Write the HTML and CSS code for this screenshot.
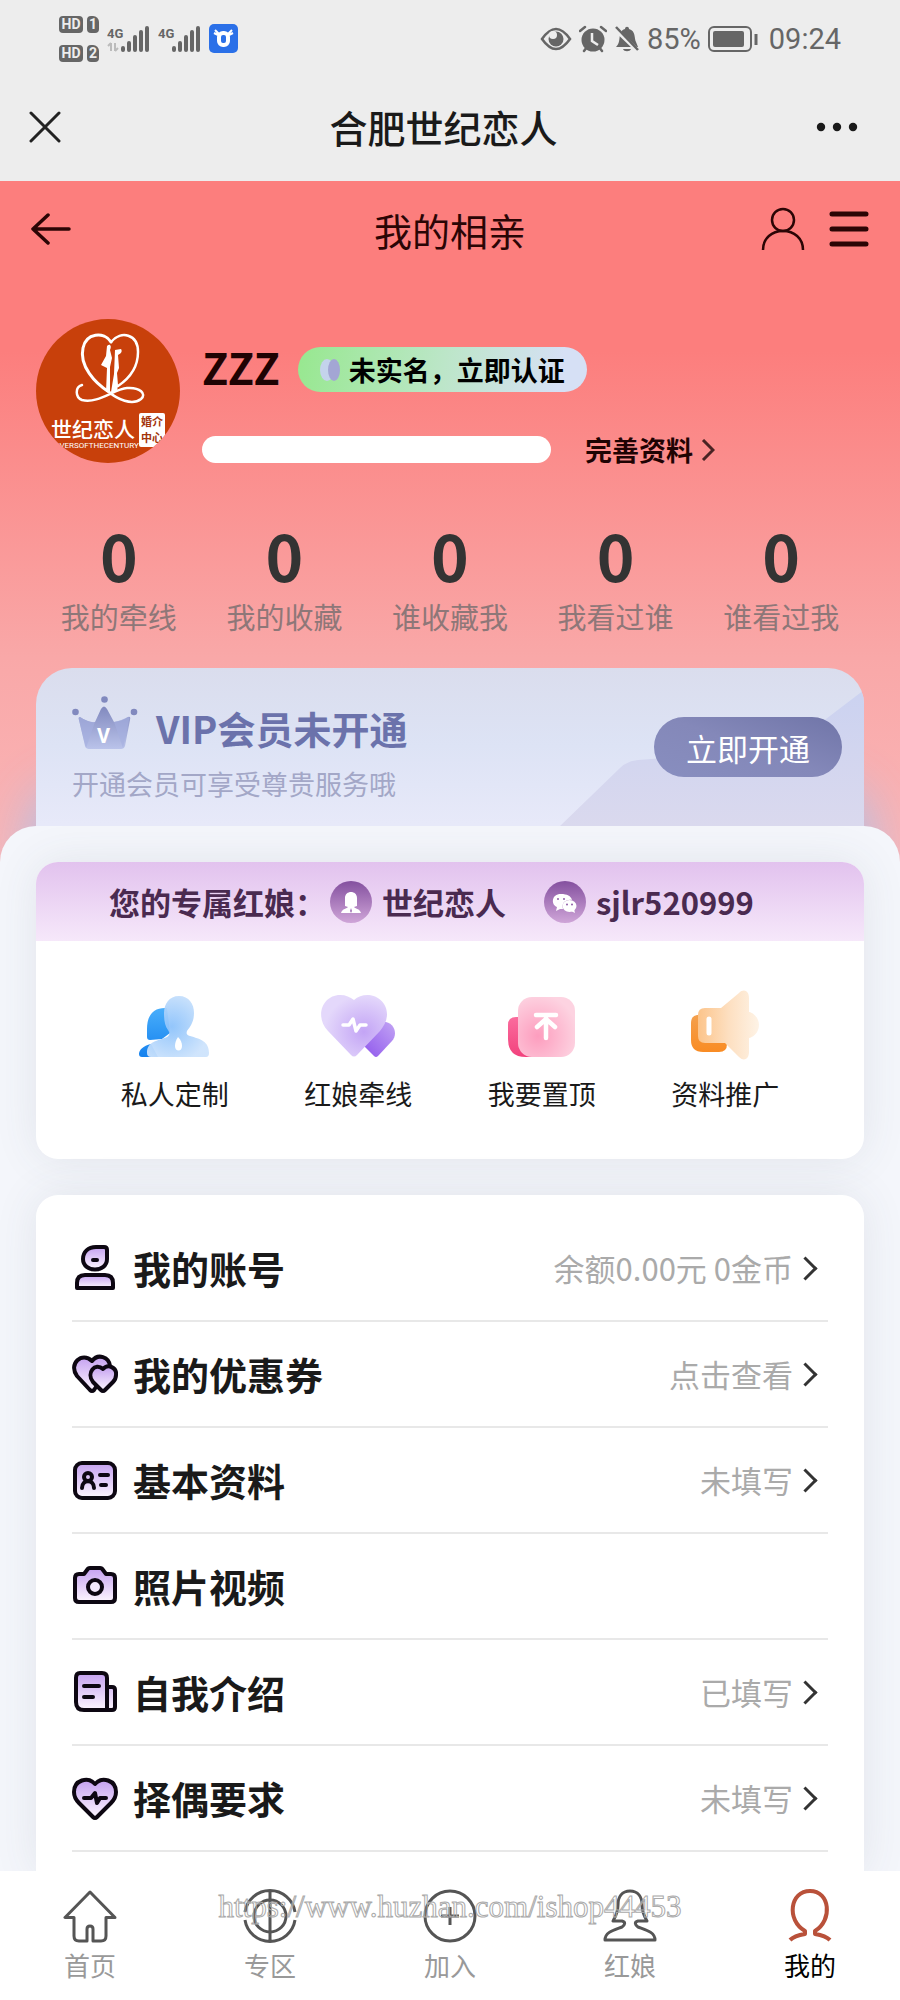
FILE: index.html
```html
<!DOCTYPE html>
<html lang="zh-CN">
<head>
  <meta charset="UTF-8">
  <meta name="viewport" content="width=device-width, initial-scale=1.0">
  <title>我的相亲</title>
  <link rel="stylesheet" href="styles.css">
</head>
<body>
<svg class="defs" width="0" height="0" aria-hidden="true">
  <defs>
    <linearGradient id="lilac" x1="0" y1="0" x2="0" y2="1">
      <stop offset="0" stop-color="#c4a0f0"/><stop offset="1" stop-color="#fdf6ff"/>
    </linearGradient>
    <linearGradient id="plum" x1="0" y1="0" x2="0" y2="1">
      <stop offset="0" stop-color="#84509f"/><stop offset="1" stop-color="#cfa5d8"/>
    </linearGradient>
  </defs>
</svg>

<!-- Статус-бар -->
<div class="status-bar">
  <div class="status-left">
    <div class="hd-group">
      <div class="hd-row"><span class="hd">HD</span><span class="sim">1</span></div>
      <div class="hd-row"><span class="hd">HD</span><span class="sim">2</span></div>
    </div>
    <svg class="signal" width="43" height="28" viewBox="0 0 43 28">
      <text x="0" y="13" class="net">4G</text>
      <path d="M4 26v-8M4 18l-3 3M8 18v8M8 26l3-3" stroke="#bbb" stroke-width="2" fill="none"/>
      <path d="M16 23v2M22 18v7M28 12v13M34 7v18M40 3v22" stroke="#666" stroke-width="4" stroke-linecap="round"/>
    </svg>
    <svg class="signal" width="43" height="28" viewBox="0 0 43 28">
      <text x="0" y="13" class="net">4G</text>
      <path d="M16 23v2M22 18v7M28 12v13M34 7v18M40 3v22" stroke="#666" stroke-width="4" stroke-linecap="round"/>
    </svg>
    <svg width="29" height="29" viewBox="0 0 29 29">
      <rect width="29" height="29" rx="5" fill="#2b70e8"/>
      <path d="M6 6l4 4M23 6l-4 4M5 9l4 2M24 9l-4 2" stroke="#fff" stroke-width="2"/>
      <rect x="10" y="9" width="9" height="12" rx="4" fill="none" stroke="#fff" stroke-width="4"/>
    </svg>
  </div>
  <div class="status-right">
    <svg width="32" height="28" viewBox="0 0 32 28">
      <path d="M2 14Q16-6 30 14Q16 34 2 14z" fill="none" stroke="#666" stroke-width="2.5"/>
      <circle cx="16" cy="14" r="7.5" fill="#666"/>
      <circle cx="13" cy="10" r="4" fill="#ededed"/>
    </svg>
    <svg width="28" height="28" viewBox="0 0 28 28">
      <circle cx="14" cy="15" r="11.5" fill="#666"/>
      <path d="M1 6l5-4M27 6l-5-4M5 26l3-4M23 26l-3-4" stroke="#666" stroke-width="2.5" stroke-linecap="round"/>
      <path d="M13 8v8l6 4" fill="none" stroke="#ededed" stroke-width="2.5"/>
    </svg>
    <svg width="26" height="28" viewBox="0 0 26 28">
      <path d="M2 22c4-4 3-8 4-12 1-4 3-6 5-6 0-3 4-3 4 0 7 2 5 9 7 13l2 5zM9 24h8c-1 3-7 3-8 0z" fill="#666"/>
      <path d="M0 3l24 23" stroke="#ededed" stroke-width="4"/>
      <path d="M2 2l22 23" stroke="#666" stroke-width="2.5"/>
    </svg>
    <span>85%</span>
    <svg width="50" height="28" viewBox="0 0 50 28">
      <rect x="1" y="2" width="42" height="24" rx="5" fill="none" stroke="#666" stroke-width="2"/>
      <rect x="5" y="6" width="31" height="16" rx="2" fill="#666"/>
      <path d="M48 9v11" stroke="#666" stroke-width="3"/>
    </svg>
    <span class="clock">09:24</span>
  </div>
</div>

<div class="title-bar">
  <button class="icon-btn" aria-label="关闭">
    <svg width="32" height="32" viewBox="0 0 32 32"><path d="M2 2l28 28M30 2L2 30" stroke="#222" stroke-width="3" stroke-linecap="round"/></svg>
  </button>
  <div class="page-title">合肥世纪恋人</div>
  <button class="icon-btn" aria-label="更多">
    <svg width="42" height="10" viewBox="0 0 42 10" fill="#1a1a1a"><circle cx="5" cy="5" r="4.200"/><circle cx="21" cy="5" r="4.200"/><circle cx="37" cy="5" r="4.200"/></svg>
  </button>
</div>

<!-- Шапка профиля -->
<header class="hero">
  <div class="nav-bar">
    <button class="icon-btn" aria-label="返回">
      <svg width="40" height="34" viewBox="0 0 40 34" fill="none" stroke="#2a0505" stroke-width="3.500" stroke-linecap="round" stroke-linejoin="round"><path d="M17 3L2 17l15 14M2 17h36"/></svg>
    </button>
    <h1>我的相亲</h1>
    <div class="nav-actions">
      <button class="icon-btn" aria-label="个人">
        <svg width="44" height="44" viewBox="0 0 44 44" fill="none" stroke="#2a0505" stroke-width="2.500"><circle cx="22" cy="13" r="11"/><path d="M2 43c0-12 9-19 20-19s20 7 20 19"/></svg>
      </button>
      <button class="icon-btn" aria-label="菜单">
        <svg width="40" height="36" viewBox="0 0 40 36" stroke="#2a0505" stroke-width="5" stroke-linecap="round"><path d="M3 3h34M3 18h34M3 33h34"/></svg>
      </button>
    </div>
  </div>

  <div class="profile">
    <svg class="avatar" width="144" height="144" viewBox="0 0 144 144">
      <clipPath id="round"><circle cx="72" cy="72" r="72"/></clipPath>
      <g clip-path="url(#round)">
        <rect width="144" height="144" fill="#c8400b"/>
        <g fill="none" stroke="#fff" stroke-linecap="round">
          <path d="M75 23C68 12 50 14 47 29c-4 18 12 35 26 44" stroke-width="3"/>
          <path d="M75 23c10-12 27-8 27 10 0 14-8 26-20 34" stroke-width="2.500"/>
          <path d="M46 66c-7 2-7 12 0 15 16 4 32-11 45-12 13-1 20 6 14 11-9 7-24 0-32-7" stroke-width="2.500"/>
        </g>
        <path d="M71 27c3-3 5 0 3 4l2 8-2 9v25h-4l1-24-6-3 5-9zM79 31l6-1c2 3-1 5-3 6l1 13-2 5 1 12-1 7h-6l3-18z" fill="#fff"/>
        <text x="15" y="118" class="logo-name">世纪恋人</text>
        <text x="14" y="129" class="logo-sub">LOVERSOFTHECENTURY</text>
        <rect x="103" y="94" width="26" height="34" rx="2" fill="#fff"/>
        <text x="105" y="107" class="logo-tag">婚介</text>
        <text x="105" y="123" class="logo-tag">中心</text>
      </g>
    </svg>
    <div class="profile-info">
      <div class="profile-row">
        <span class="nickname">ZZZ</span>
        <a class="verify" href="#">
          <svg width="20" height="24" viewBox="0 0 20 24"><ellipse cx="7" cy="12" rx="7" ry="11" fill="#c4d3ec"/><ellipse cx="14" cy="12" rx="6" ry="11" fill="#a3a6d4"/></svg>
          未实名，立即认证
        </a>
      </div>
      <div class="profile-row">
        <div class="progress"></div>
        <a class="complete" href="#">完善资料
          <svg width="14" height="22" viewBox="0 0 14 22"><path d="M2 1l10 10L2 21" fill="none" stroke="#4a2323" stroke-width="3"/></svg>
        </a>
      </div>
    </div>
  </div>

  <div class="stats">
    <a href="#"><b>0</b><span>我的牵线</span></a>
    <a href="#"><b>0</b><span>我的收藏</span></a>
    <a href="#"><b>0</b><span>谁收藏我</span></a>
    <a href="#"><b>0</b><span>我看过谁</span></a>
    <a href="#"><b>0</b><span>谁看过我</span></a>
  </div>

  <div class="vip">
    <svg class="vip-bg" width="304" height="136" viewBox="0 0 304 136">
      <defs><linearGradient id="facet" x1="0" y1="0" x2="0" y2="1"><stop offset="0" stop-color="#cbd2f0"/><stop offset="1" stop-color="#dad9ee"/></linearGradient></defs>
      <path d="M0 136L60 78q7-7 18-8l132-10q20-3 31-12L304 0v136z" fill="url(#facet)"/>
    </svg>
    <div class="vip-text">
      <div class="vip-title">
        <svg width="66" height="54" viewBox="0 0 66 54">
          <defs><linearGradient id="crown" x1="0" y1="0" x2="0" y2="1"><stop offset="0" stop-color="#8189be"/><stop offset="1" stop-color="#bac3ea"/></linearGradient></defs>
          <circle cx="3.500" cy="16" r="3.300" fill="#8189be"/><circle cx="32.500" cy="3.500" r="3.300" fill="#8189be"/><circle cx="62" cy="16" r="3.300" fill="#8189be"/>
          <path d="M8 21q9 6 15 5l6-13q3-5 6 0l7 13q8-1 14-5 3-1 2 3l-5 26q-1 3-4 3H17q-3 0-4-3L7 24q-1-3 1-3z" fill="url(#crown)"/>
          <path d="M8 21q9 6 15 5l-9 26L7 24q-1-3 1-3zM56 21q-8 4-14 5l9 26 6-28q1-3-1-3z" fill="#a5afdf" opacity=".6"/>
          <text x="25" y="47" class="crown-v">V</text>
        </svg>
        <h2>VIP会员未开通</h2>
      </div>
      <p>开通会员可享受尊贵服务哦</p>
    </div>
    <button class="vip-btn">立即开通</button>
  </div>
</header>

<main class="sheet">
  <section class="card matchmaker">
    <div class="matchmaker-head">
      <span>您的专属红娘：</span>
      <span class="contact">
        <svg width="42" height="42" viewBox="0 0 42 42"><circle cx="21" cy="21" r="21" fill="url(#plum)"/><path d="M15 25V17c0-8 12-8 12 0v8l-3 1c2 2 6 2 7 6H11c1-4 5-4 7-6z" fill="#fff"/><path d="M21 27l1 3-1 2-1-2z" fill="#a273b8"/></svg>
        世纪恋人
      </span>
      <span class="contact">
        <svg width="42" height="42" viewBox="0 0 42 42"><circle cx="21" cy="21" r="21" fill="url(#plum)"/><path d="M17 13c-10 0-10 11-4 13l-1 4 4-2h3c-2-6 3-10 9-9-1-4-5-6-11-6z" fill="#fff"/><ellipse cx="25.500" cy="25" rx="7" ry="6" fill="#fff"/><path d="M27 30l4 2-1-4z" fill="#fff"/><g fill="#8f5da8"><circle cx="14" cy="18" r="1"/><circle cx="20" cy="18" r="1"/><circle cx="23" cy="23.500" r="1"/><circle cx="28" cy="23.500" r="1"/></g></svg>
        sjlr520999
      </span>
    </div>
    <nav class="shortcuts">
      <a href="#">
        <svg width="74" height="74" viewBox="0 0 74 74">
          <defs>
            <linearGradient id="blueBack" x1="0" y1="0" x2="0" y2="1"><stop offset="0" stop-color="#49aefb"/><stop offset="1" stop-color="#1481ee"/></linearGradient>
            <radialGradient id="blueFront" cx=".4" cy=".5" r=".6"><stop offset="0" stop-color="#8cc2fb"/><stop offset="1" stop-color="#cde3fc"/></radialGradient>
          </defs>
          <path d="M29 18C14 17 9 27 9 39v8q0 3 3 3l12-1 8-6zM13 54C5 56 1 60 1 64q0 3 3 3h16z" fill="url(#blueBack)"/>
          <path d="M41 6c10 0 15 8 15 17 0 8-3 13-7 18-1 3 0 4 3 5 10 3 19 5 19 17q0 4-3 4H13q-4 0-4-4c0-12 11-12 20-16 3-2 3-4 1-7-3-4-4-9-4-17 0-9 5-17 15-17z" fill="url(#blueFront)" opacity=".94"/>
          <path d="M40 47c-2 3-3 6-3 9 0 6 7 6 7 0 0-3-1-6-4-9z" fill="#fff"/>
        </svg>
        <span>私人定制</span>
      </a>
      <a href="#">
        <svg width="74" height="74" viewBox="0 0 74 74">
          <defs>
            <linearGradient id="violetBack" x1="1" y1="0" x2="0" y2="1"><stop offset="0" stop-color="#c2a4f4"/><stop offset="1" stop-color="#8e55ec"/></linearGradient>
            <radialGradient id="violetFront" cx=".65" cy=".6" r=".6"><stop offset="0" stop-color="#c3a4f5"/><stop offset="1" stop-color="#e4d8fb"/></radialGradient>
          </defs>
          <path d="M60 32c12-2 18 11 11 19L57 66q-2 2-4 0L41 54z" fill="url(#violetBack)"/>
          <path d="M33 10C45-1 66 7 66 24c0 7-3 12-7 17L36 65q-3 3-6 0L7 41C-7 26 2 5 19 5c6 0 10 2 14 5z" fill="url(#violetFront)"/>
          <path d="M22 35h6l4-6 3 12 4-6h6" fill="none" stroke="#fff" stroke-width="3.500" stroke-linecap="round" stroke-linejoin="round"/>
        </svg>
        <span>红娘牵线</span>
      </a>
      <a href="#">
        <svg width="74" height="74" viewBox="0 0 74 74">
          <defs>
            <linearGradient id="pinkBack" x1="0" y1="0" x2="0" y2="1"><stop offset="0" stop-color="#fa6c9d"/><stop offset="1" stop-color="#f2427d"/></linearGradient>
            <radialGradient id="pinkFront" cx=".35" cy=".65" r=".7"><stop offset="0" stop-color="#fd9dbe"/><stop offset="1" stop-color="#fdd3e1"/></radialGradient>
          </defs>
          <path d="M14 27h-3q-8 0-8 8v14q0 18 18 18h20V45z" fill="url(#pinkBack)"/>
          <rect x="13" y="7" width="57" height="60" rx="14" fill="url(#pinkFront)"/>
          <path d="M31 25h20M41 28v20M32 37l9-8 9 8" fill="none" stroke="#fff" stroke-width="4.500" stroke-linecap="round" stroke-linejoin="round"/>
        </svg>
        <span>我要置顶</span>
      </a>
      <a href="#">
        <svg width="74" height="74" viewBox="0 0 74 74">
          <defs>
            <linearGradient id="orangeBack" x1="0" y1="0" x2="0" y2="1"><stop offset="0" stop-color="#f4a04d"/><stop offset="1" stop-color="#f98c24"/></linearGradient>
            <linearGradient id="orangeFront" x1="0" y1="0" x2="1" y2="0"><stop offset="0" stop-color="#fcc48a"/><stop offset=".5" stop-color="#fddfc0"/><stop offset="1" stop-color="#fef3e6"/></linearGradient>
          </defs>
          <path d="M12 25H9q-6 1-6 8v17q0 12 12 12h16q8 0 8-8l-9-12z" fill="url(#orangeBack)"/>
          <path d="M17 18h16L51 3c5-5 10-2 10 5v14c3 0 10 5 10 13s-7 13-10 13v14c0 7-5 10-10 5L37 53H17q-7 0-7-7V25q0-7 7-7z" fill="url(#orangeFront)"/>
          <path d="M21 29v14" stroke="#fff" stroke-width="5" stroke-linecap="round"/>
        </svg>
        <span>资料推广</span>
      </a>
    </nav>
  </section>

  <section class="card menu">
    <a class="menu-item" href="#">
      <svg class="menu-icon" width="46" height="46" viewBox="0 0 46 46"><path d="M24 2h8q3 0 3 3v9c0 14-24 14-24 0C11 7 16 2 24 2z"/><path d="M5 43v-5q0-8 8-8h20q8 0 8 8v5z"/><path d="M21 15h4"/></svg>
      <span class="menu-name">我的账号</span><span class="menu-value">余额0.00元 0金币</span><i class="arrow"></i>
    </a>
    <a class="menu-item" href="#">
      <svg class="menu-icon" width="46" height="46" viewBox="0 0 46 46"><path d="M20 10C26 2 37 6 38 15L22 39q-2 2-4 0L5 25C-4 13 10 0 20 10z"/><path d="M31 18c5-6 14-1 13 6 0 3-1 5-3 7l-8 8q-2 2-4 0l-8-8c-7-9 2-20 10-13z"/></svg>
      <span class="menu-name">我的优惠券</span><span class="menu-value">点击查看</span><i class="arrow"></i>
    </a>
    <a class="menu-item" href="#">
      <svg class="menu-icon" width="46" height="46" viewBox="0 0 46 46"><rect x="3" y="6" width="40" height="35" rx="7"/><circle cx="16" cy="20" r="4" fill="none"/><path d="M10 31c0-9 12-9 12 0M28 18h8M29 28h5" fill="none"/></svg>
      <span class="menu-name">基本资料</span><span class="menu-value">未填写</span><i class="arrow"></i>
    </a>
    <a class="menu-item" href="#">
      <svg class="menu-icon" width="46" height="46" viewBox="0 0 46 46"><path d="M7 11h5l3-4q1-2 3-2h10q2 0 3 2l3 4h5q4 0 4 4v20q0 4-4 4H7q-4 0-4-4V15q0-4 4-4z"/><circle cx="23" cy="24" r="7" fill="#f3e9fd"/></svg>
      <span class="menu-name">照片视频</span>
    </a>
    <a class="menu-item" href="#">
      <svg class="menu-icon" width="46" height="46" viewBox="0 0 46 46"><path d="M35 18h5q3 0 3 3v17q0 3-3 3h-5zM8 4h22q5 0 5 5v32H12q-8 0-8-8V9q0-5 4-5z"/><path d="M12 17h15M12 28h9"/></svg>
      <span class="menu-name">自我介绍</span><span class="menu-value">已填写</span><i class="arrow"></i>
    </a>
    <a class="menu-item" href="#">
      <svg class="menu-icon" width="46" height="46" viewBox="0 0 46 46"><path d="M23 9c7-8 21-4 21 8 0 5-2 8-5 11L25 42q-2 2-4 0L7 28c-3-3-5-6-5-11C2 5 16 1 23 9z"/><path d="M12 23h7l4-5 2 10 3-5h6" fill="none"/></svg>
      <span class="menu-name">择偶要求</span><span class="menu-value">未填写</span><i class="arrow"></i>
    </a>
  </section>
</main>

<!-- Нижнее меню -->
<nav class="tab-bar">
  <a href="#">
    <svg width="54" height="54" viewBox="0 0 54 54"><path d="M27 3L2 28.500h9V47q0 5 5 5h8V40q0-3 3-3t3 3v12h8q5 0 5-5V28.500h9z"/></svg>
    首页
  </a>
  <a href="#">
    <svg width="54" height="54" viewBox="0 0 54 54"><path d="M2 23a25.300 25.300 0 0 1 50 0M2 31a25.300 25.300 0 0 0 50 0M27 2v50"/><circle cx="27" cy="27" r="16"/></svg>
    专区
  </a>
  <a href="#">
    <svg width="54" height="54" viewBox="0 0 54 54"><circle cx="27" cy="27" r="25"/><path d="M27 18v18M18 27h18"/></svg>
    加入
  </a>
  <a href="#">
    <svg width="54" height="54" viewBox="0 0 54 54"><path d="M27 2c-8 0-12 6-12 14 0 6-2 11-5 16h9c4 1 3 4 0 6-8 3-17 5-17 13h50c0-8-9-10-17-13-3-2-4-5 0-6h9c-3-5-5-10-5-16 0-8-4-14-12-14z"/></svg>
    红娘
  </a>
  <a href="#" class="active">
    <svg width="54" height="54" viewBox="0 0 54 54"><path d="M7 51c4-4 9-5 15-6v-3C3 31 7 2 27 2s23 29 5 40v3c6 1 11 2 15 6"/></svg>
    我的
  </a>
  <div class="watermark">https://www.huzhan.com/ishop44453</div>
</nav>
</body>
</html>
```

FILE: styles.css
```css
* {
  box-sizing: border-box;
}
body {
  margin: 0;
  padding-bottom: 129px;
  background-color: #f4f6fb;
  font-family: "Noto Sans CJK SC", sans-serif;
  color: #1a1a1a;
}
a {
  color: inherit;
  text-decoration: none;
}
svg {
  flex: none;
  display: block;
}
.defs {
  position: absolute;
}
h1, h2, p {
  margin: 0;
}
.icon-btn {
  padding: 0;
  border: 0;
  background: none;
}

/* status bar */
.status-bar {
  display: flex;
  justify-content: space-between;
  align-items: center;
  height: 77px;
  padding: 0 59px;
  background-color: #ededed;
  color: #666;
}
.status-left, .status-right {
  display: flex;
  align-items: center;
  gap: 8px;
}
.status-right {
  gap: 7px;
  font: 29px/32px Roboto, sans-serif;
}
.clock {
  margin-left: 4px;
}
.hd-group {
  display: grid;
  gap: 12px;
}
.hd-row {
  display: flex;
  gap: 4px;
}
.hd, .sim {
  width: 24px;
  height: 17px;
  border-radius: 4px;
  background-color: #666;
  color: #ededed;
  font: bold 14px/17px Roboto, sans-serif;
  text-align: center;
}
.sim {
  width: 12px;
  border-top-right-radius: 6px;
}
.net {
  font: bold 13px Roboto, sans-serif;
  fill: #666;
}

/* title */
.title-bar {
  display: grid;
  grid-template-columns: 1fr auto 1fr;
  align-items: center;
  height: 104px;
  padding: 0 42px 4px 29px;
  background-color: #ededed;
}
.title-bar .icon-btn {
  justify-self: start;
}
.title-bar .icon-btn:last-child {
  justify-self: end;
}
.page-title {
  font-size: 38px;
  line-height: 52px;
  font-weight: 500;
}

/* hero */
.hero {
  overflow: hidden;
  background: linear-gradient(#fc7e7d 25%, #f9a8a8 70%, #fab6b8);
}
.nav-bar {
  display: flex;
  justify-content: space-between;
  align-items: center;
  height: 96px;
  padding: 0 31px;
}
.nav-bar > .icon-btn, .nav-actions {
  flex: 1;
}
h1 {
  font-size: 38px;
  font-weight: 400;
  color: #2a0505;
}
.nav-actions {
  display: flex;
  justify-content: flex-end;
  align-items: center;
  gap: 24px;
}
.profile {
  display: flex;
  align-items: flex-end;
  gap: 22px;
  padding: 42px 36px 0;
}
.logo-name {
  font-size: 21px;
  font-weight: 500;
  fill: #fff;
}
.logo-sub {
  font: 8px Roboto, sans-serif;
  fill: #fff;
}
.logo-tag {
  font-size: 11px;
  font-weight: bold;
  fill: #a3340a;
}
.profile-info {
  flex: 1;
  display: grid;
  gap: 44px;
}
.profile-row {
  display: flex;
  align-items: center;
}
.nickname {
  margin-right: 18px;
  padding-bottom: 6px;
  font-size: 43px;
  line-height: 39px;
  font-weight: bold;
  color: #1f0303;
}
.verify {
  display: flex;
  align-items: center;
  gap: 9px;
  height: 45px;
  padding: 0 22px;
  border-radius: 23px;
  background: linear-gradient(100deg, #97e88f, #bce6c8 50%, #d6e0f5 90%);
  color: #000;
  font-size: 27px;
  font-weight: bold;
}
.progress {
  flex: 0 1 349px;
  height: 27px;
  border-radius: 14px;
  background-color: #fff;
}
.complete {
  display: flex;
  align-items: center;
  gap: 8px;
  margin-left: 34px;
  color: #1f0303;
  font-size: 27px;
  line-height: 27px;
  font-weight: bold;
}
.stats {
  display: grid;
  grid-template-columns: repeat(5, 1fr);
  padding: 59px 36px 36px;
  text-align: center;
}
.stats a {
  display: grid;
  gap: 14px;
}
.stats b {
  font-size: 64px;
  line-height: 64px;
  color: #333;
}
.stats span {
  font-size: 29px;
  line-height: 32px;
  color: #8e7778;
}

/* vip */
.vip {
  position: relative;
  display: flex;
  justify-content: space-between;
  align-items: flex-start;
  margin: 0 36px;
  padding: 28px 22px 60px 36px;
  border-radius: 36px 36px 0 0;
  background: linear-gradient(#dadded, #dde3f5 40%, #e7e9f9 80%);
  box-shadow: 0 125px 50px 6px rgba(165, 195, 240, 0.9);
  overflow: hidden;
}
.vip-bg {
  position: absolute;
  right: 0;
  bottom: 36px;
}
.vip-text {
  display: grid;
  gap: 16px;
}
.vip-title {
  display: flex;
  align-items: flex-end;
  gap: 18px;
}
.crown-v {
  font: bold 20px Roboto, sans-serif;
  fill: #fff;
}
h2 {
  font-size: 38px;
  line-height: 44px;
  color: #6b72ab;
}
.vip p {
  font-size: 27px;
  line-height: 36px;
  color: #a3a7c7;
}
.vip-btn {
  position: relative;
  margin-top: 21px;
  padding: 0 32px;
  height: 60px;
  border: 0;
  border-radius: 30px;
  background: linear-gradient(20deg, #888ebf, #8488b9 50%, #7075a8);
  color: #fff;
  font-family: inherit;
  font-size: 31px;
}

/* sheet */
.sheet {
  position: relative;
  display: grid;
  gap: 36px;
  margin-top: -36px;
  padding: 36px 36px 0;
  border-radius: 36px 36px 0 0;
  background-color: #f4f6fb;
  overflow: hidden;
}
.card {
  border-radius: 22px;
  background-color: #fff;
  box-shadow: 0 0 44px rgba(70, 75, 100, 0.1);
}
.matchmaker-head {
  display: flex;
  align-items: center;
  height: 79px;
  padding-left: 73px;
  border-radius: 22px 22px 0 0;
  background: linear-gradient(#e2c2ee, #f6e8fa);
  color: #4a2a50;
  font-size: 31px;
  font-weight: bold;
}
.contact {
  display: flex;
  align-items: center;
  gap: 10px;
  margin-left: 4px;
  margin-right: 34px;
}
.shortcuts {
  display: grid;
  grid-template-columns: repeat(4, 1fr);
  padding: 49px 47px 47px;
}
.shortcuts a {
  display: grid;
  justify-items: center;
  gap: 12px;
  font-size: 27px;
  line-height: 36px;
}

/* menu */
.menu {
  padding: 21px 36px;
  border-radius: 22px 22px 0 0;
}
.menu-item {
  display: flex;
  align-items: center;
  height: 106px;
  border-bottom: 2px solid #e8e8e8;
}
.menu-icon {
  fill: url(#lilac);
  stroke: #0d0712;
  stroke-width: 4;
  stroke-linecap: round;
  stroke-linejoin: round;
}
.menu-name {
  flex: 1;
  margin-left: 15px;
  font-size: 38px;
  line-height: 52px;
  font-weight: bold;
}
.menu-value {
  font-size: 31px;
  line-height: 44px;
  color: #aaa;
}
.arrow {
  width: 17px;
  height: 17px;
  margin: 0 14px 0 4px;
  border: solid #333;
  border-width: 3px 3px 0 0;
  transform: rotate(45deg);
}

/* tab bar */
.tab-bar {
  position: fixed;
  left: 0;
  right: 0;
  bottom: 0;
  display: grid;
  grid-template-columns: repeat(5, 1fr);
  padding: 18px 0 20px;
  background-color: #fff;
}
.tab-bar a {
  display: grid;
  justify-items: center;
  gap: 7px;
  font-size: 26px;
  line-height: 30px;
  color: #999;
}
.tab-bar svg {
  fill: none;
  stroke: #555;
  stroke-width: 3;
  stroke-linejoin: round;
}
.tab-bar .active {
  color: #000;
}
.active svg {
  stroke: #b9513a;
  stroke-width: 4;
}
.watermark {
  position: absolute;
  top: 18px;
  left: 0;
  right: 0;
  text-align: center;
  font-family: "Liberation Serif", serif;
  font-size: 31px;
  line-height: 36px;
  color: transparent;
  -webkit-text-stroke: 1px #aaa;
  pointer-events: none;
}
```
